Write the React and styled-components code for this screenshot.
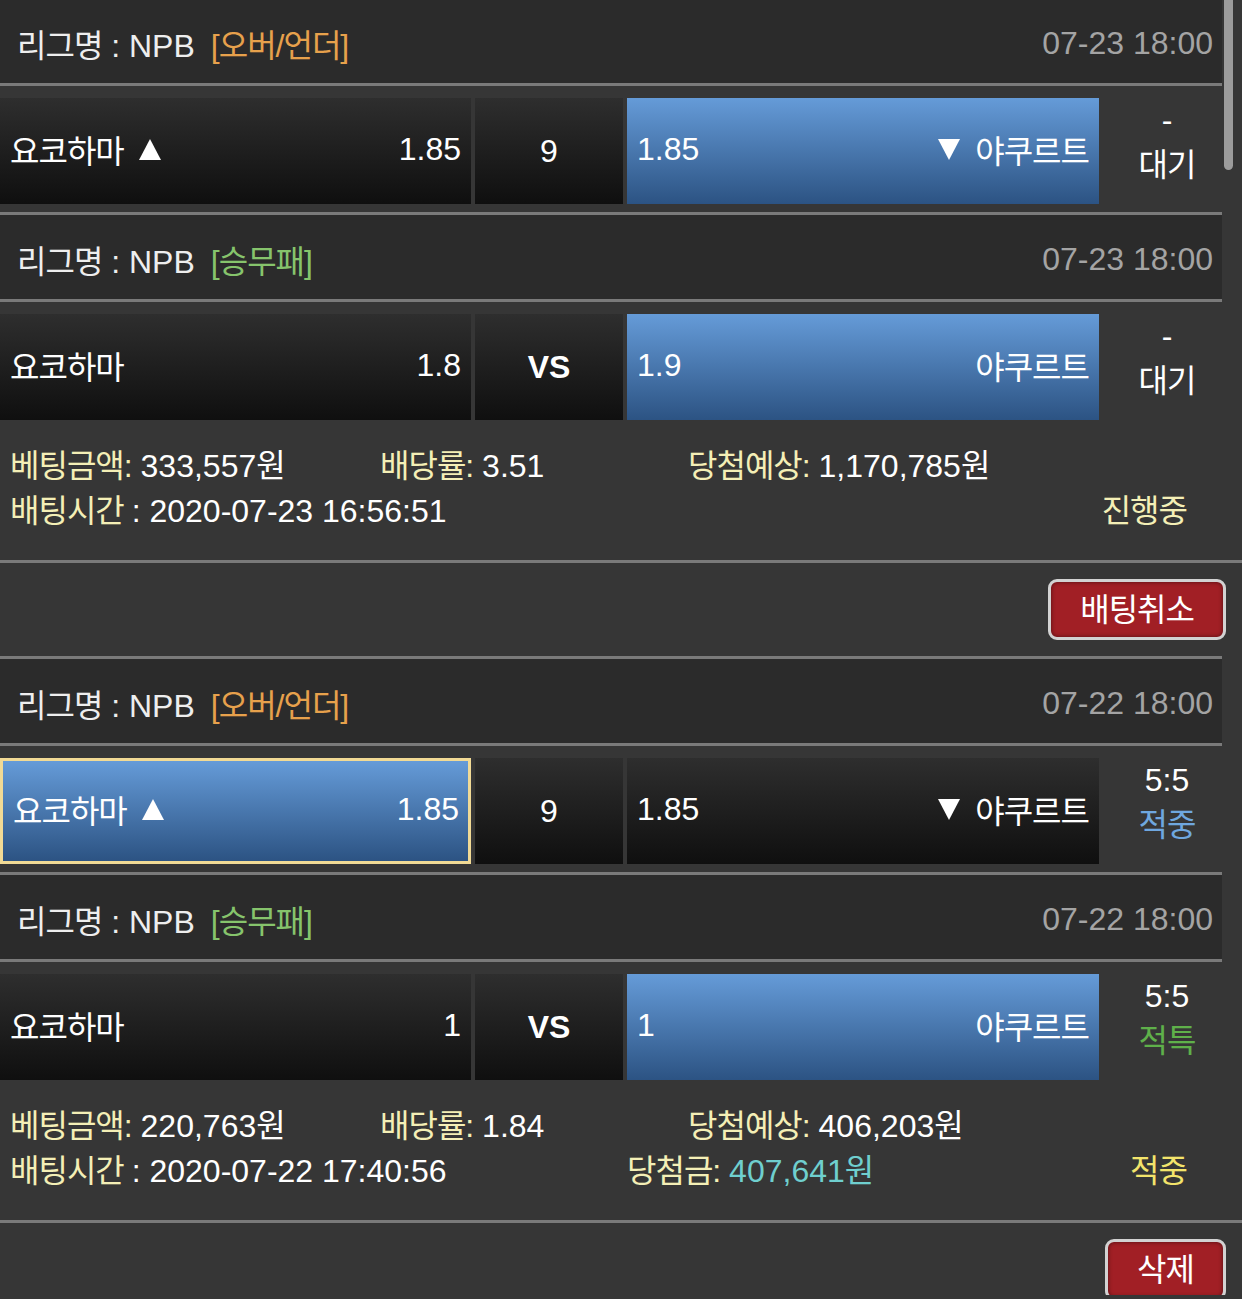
import styled, { createGlobalStyle } from "styled-components";

const GlobalStyle = createGlobalStyle`
  body {
    margin: 0;
    background: #363636;
    font-family: "Liberation Sans", "Noto Sans CJK KR", sans-serif;
    color: #ffffff;
  }
`;

const bets = [
  {
    games: [
      {
        league: "[오버/언더]",
        kind: "ou",
        date: "07-23 18:00",
        homeOdds: "1.85",
        mid: "9",
        awayOdds: "1.85",
        pick: "away",
        score: "-",
        result: "대기",
        resultColor: "#ffffff",
        arrows: true,
      },
      {
        league: "[승무패]",
        kind: "wdl",
        date: "07-23 18:00",
        homeOdds: "1.8",
        mid: "VS",
        awayOdds: "1.9",
        pick: "away",
        score: "-",
        result: "대기",
        resultColor: "#ffffff",
      },
    ],
    amount: "333,557원",
    rate: "3.51",
    expect: "1,170,785원",
    time: "2020-07-23 16:56:51",
    status: "진행중",
    statusColor: "#f4efb6",
    button: "배팅취소",
  },
  {
    games: [
      {
        league: "[오버/언더]",
        kind: "ou",
        date: "07-22 18:00",
        homeOdds: "1.85",
        mid: "9",
        awayOdds: "1.85",
        pick: "home",
        highlight: true,
        score: "5:5",
        result: "적중",
        resultColor: "#6fa7df",
        arrows: true,
      },
      {
        league: "[승무패]",
        kind: "wdl",
        date: "07-22 18:00",
        homeOdds: "1",
        mid: "VS",
        awayOdds: "1",
        pick: "away",
        score: "5:5",
        result: "적특",
        resultColor: "#5fb04a",
      },
    ],
    amount: "220,763원",
    rate: "1.84",
    expect: "406,203원",
    time: "2020-07-22 17:40:56",
    win: "407,641원",
    status: "적중",
    statusColor: "#f3e46b",
    button: "삭제",
  },
];

const App = () => {
  return (
    <Page>
      <GlobalStyle />
      <ScrollThumb />
      {bets.map((bet, i) => (
        <section key={i}>
          {bet.games.map((g, j) => (
            <Block key={j}>
              <LeagueHeader>
                <LeagueTitle>
                  <Ko>리그명</Ko> : NPB
                  <LeagueType $kind={g.kind}>
                    <Ko>{g.league}</Ko>
                  </LeagueType>
                </LeagueTitle>
                <DateText>{g.date}</DateText>
              </LeagueHeader>
              <MatchRow>
                <OddsCell $picked={g.pick === "home"} $highlight={g.highlight}>
                  <Team>
                    <Ko>요코하마</Ko>
                    {g.arrows && <Arrow />}
                  </Team>
                  <span>{g.homeOdds}</span>
                </OddsCell>
                <MidCell $bold={g.mid === "VS"}>{g.mid}</MidCell>
                <OddsCell $picked={g.pick === "away"}>
                  <span>{g.awayOdds}</span>
                  <Team>
                    {g.arrows && <Arrow $down />}
                    <Ko>야쿠르트</Ko>
                  </Team>
                </OddsCell>
                <Result>
                  <div>{g.score}</div>
                  <ResultText $color={g.resultColor}>
                    <Ko>{g.result}</Ko>
                  </ResultText>
                </Result>
              </MatchRow>
            </Block>
          ))}
          <Info>
            <InfoLine>
              <Field $width={370}>
                <Label>베팅금액:</Label> {bet.amount}
              </Field>
              <Field $width={308}>
                <Label>배당률:</Label> {bet.rate}
              </Field>
              <Field>
                <Label>당첨예상:</Label> {bet.expect}
              </Field>
            </InfoLine>
            <InfoLine>
              <Field $width={617}>
                <Label>배팅시간 </Label>: {bet.time}
              </Field>
              <Field $grow>
                {bet.win && (
                  <>
                    <Label>당첨금:</Label> <WinValue>{bet.win}</WinValue>
                  </>
                )}
              </Field>
              <BetStatus $color={bet.statusColor}>{bet.status}</BetStatus>
            </InfoLine>
          </Info>
          <ButtonBar>
            <RedButton>{bet.button}</RedButton>
          </ButtonBar>
        </section>
      ))}
    </Page>
  );
};

const Page = styled.div`
  position: relative;
  width: 1242px;
  height: 1299px;
  overflow: hidden;
  background: #363636;
  margin-top: -4px;
`;

const ScrollThumb = styled.div`
  position: absolute;
  top: 0;
  right: 9px;
  width: 9px;
  height: 174px;
  background: #9c9c9c;
  border-radius: 0 0 5px 5px;
  z-index: 2;
`;

const Block = styled.div`
  width: 1222px;
`;

const Ko = styled.span`
  font-size: 32px;
  letter-spacing: -1px;
`;

const LeagueHeader = styled.div`
  display: flex;
  align-items: center;
  justify-content: space-between;
  height: 84px;
  padding: 4px 9px 0 17px;
  box-sizing: border-box;
  height: 90px;
  background: #2b2b2b;
  border-top: 3px solid #7a7a7a;
  border-bottom: 3px solid #7a7a7a;
  font-size: 32px;
`;

const LeagueTitle = styled.div`
  color: #eeeeee;
`;

const LeagueType = styled.span`
  margin-left: 16px;
  color: ${(p) => (p.$kind === "ou" ? "#e7a14c" : "#86c46c")};
`;

const DateText = styled.div`
  color: #a4a4a4;
`;

const MatchRow = styled.div`
  display: grid;
  grid-template-columns: 471px 148px 472px 1fr;
  column-gap: 4px;
  height: 126px;
  padding: 12px 0 9px;
  box-sizing: border-box;
  font-size: 32px;
`;

const OddsCell = styled.div`
  display: flex;
  align-items: center;
  justify-content: space-between;
  padding: 0 10px 4px;
  box-sizing: border-box;
  background: ${(p) =>
    p.$picked
      ? "linear-gradient(#659bd8, #2c5383)"
      : "linear-gradient(#2e2e2e, #0f0f0f)"};
  border: ${(p) => (p.$highlight ? "3px solid #f1da95" : "none")};
  padding-right: ${(p) => (p.$highlight ? "9px" : "10px")};
`;

const Team = styled.span`
  display: flex;
  align-items: center;
  gap: 15px;
`;

const Arrow = styled.span`
  display: inline-block;
  width: 0;
  height: 0;
  border-left: 11px solid transparent;
  border-right: 11px solid transparent;
  ${(p) =>
    p.$down
      ? "border-top: 21px solid #ffffff;"
      : "border-bottom: 21px solid #ffffff;"}
`;

const MidCell = styled.div`
  display: flex;
  align-items: center;
  justify-content: center;
  background: linear-gradient(#2e2e2e, #0f0f0f);
  font-weight: ${(p) => (p.$bold ? 700 : 400)};
`;

const Result = styled.div`
  display: flex;
  flex-direction: column;
  justify-content: center;
  align-items: center;
  padding: 0 0 16px 9px;
  line-height: 45px;
`;

const ResultText = styled.div`
  color: ${(p) => p.$color};
`;

const Info = styled.div`
  height: 135px;
  padding: 12px 0 0 10px;
  box-sizing: border-box;
  border-bottom: 3px solid #7a7a7a;
  font-size: 32px;
`;

const InfoLine = styled.div`
  display: flex;
  align-items: center;
  height: 45px;
`;

const Field = styled.div`
  width: ${(p) => (p.$width ? `${p.$width}px` : "auto")};
  flex: ${(p) => (p.$grow ? 1 : "none")};
  white-space: nowrap;
`;

const Label = styled.span`
  color: #f4efb6;
  font-size: 32px;
  letter-spacing: -1px;
`;

const WinValue = styled.span`
  color: #6fcfcf;
`;

const BetStatus = styled.div`
  margin-right: 55px;
  color: ${(p) => p.$color};
  font-size: 32px;
  letter-spacing: -1px;
`;

const ButtonBar = styled.div`
  display: flex;
  justify-content: flex-end;
  height: 93px;
  padding: 16px 16px 0 0;
  box-sizing: border-box;
`;

const RedButton = styled.button`
  height: 61px;
  padding: 0 29px 5px;
  background: #a11f25;
  border: 3px solid #d2d2d2;
  border-radius: 9px;
  box-shadow: inset 0 0 4px rgba(0, 0, 0, 0.5);
  color: #ffffff;
  font-family: "Liberation Sans", "Noto Sans CJK KR", sans-serif;
  font-size: 32px;
  letter-spacing: -1px;
  cursor: pointer;
`;

export default App;
